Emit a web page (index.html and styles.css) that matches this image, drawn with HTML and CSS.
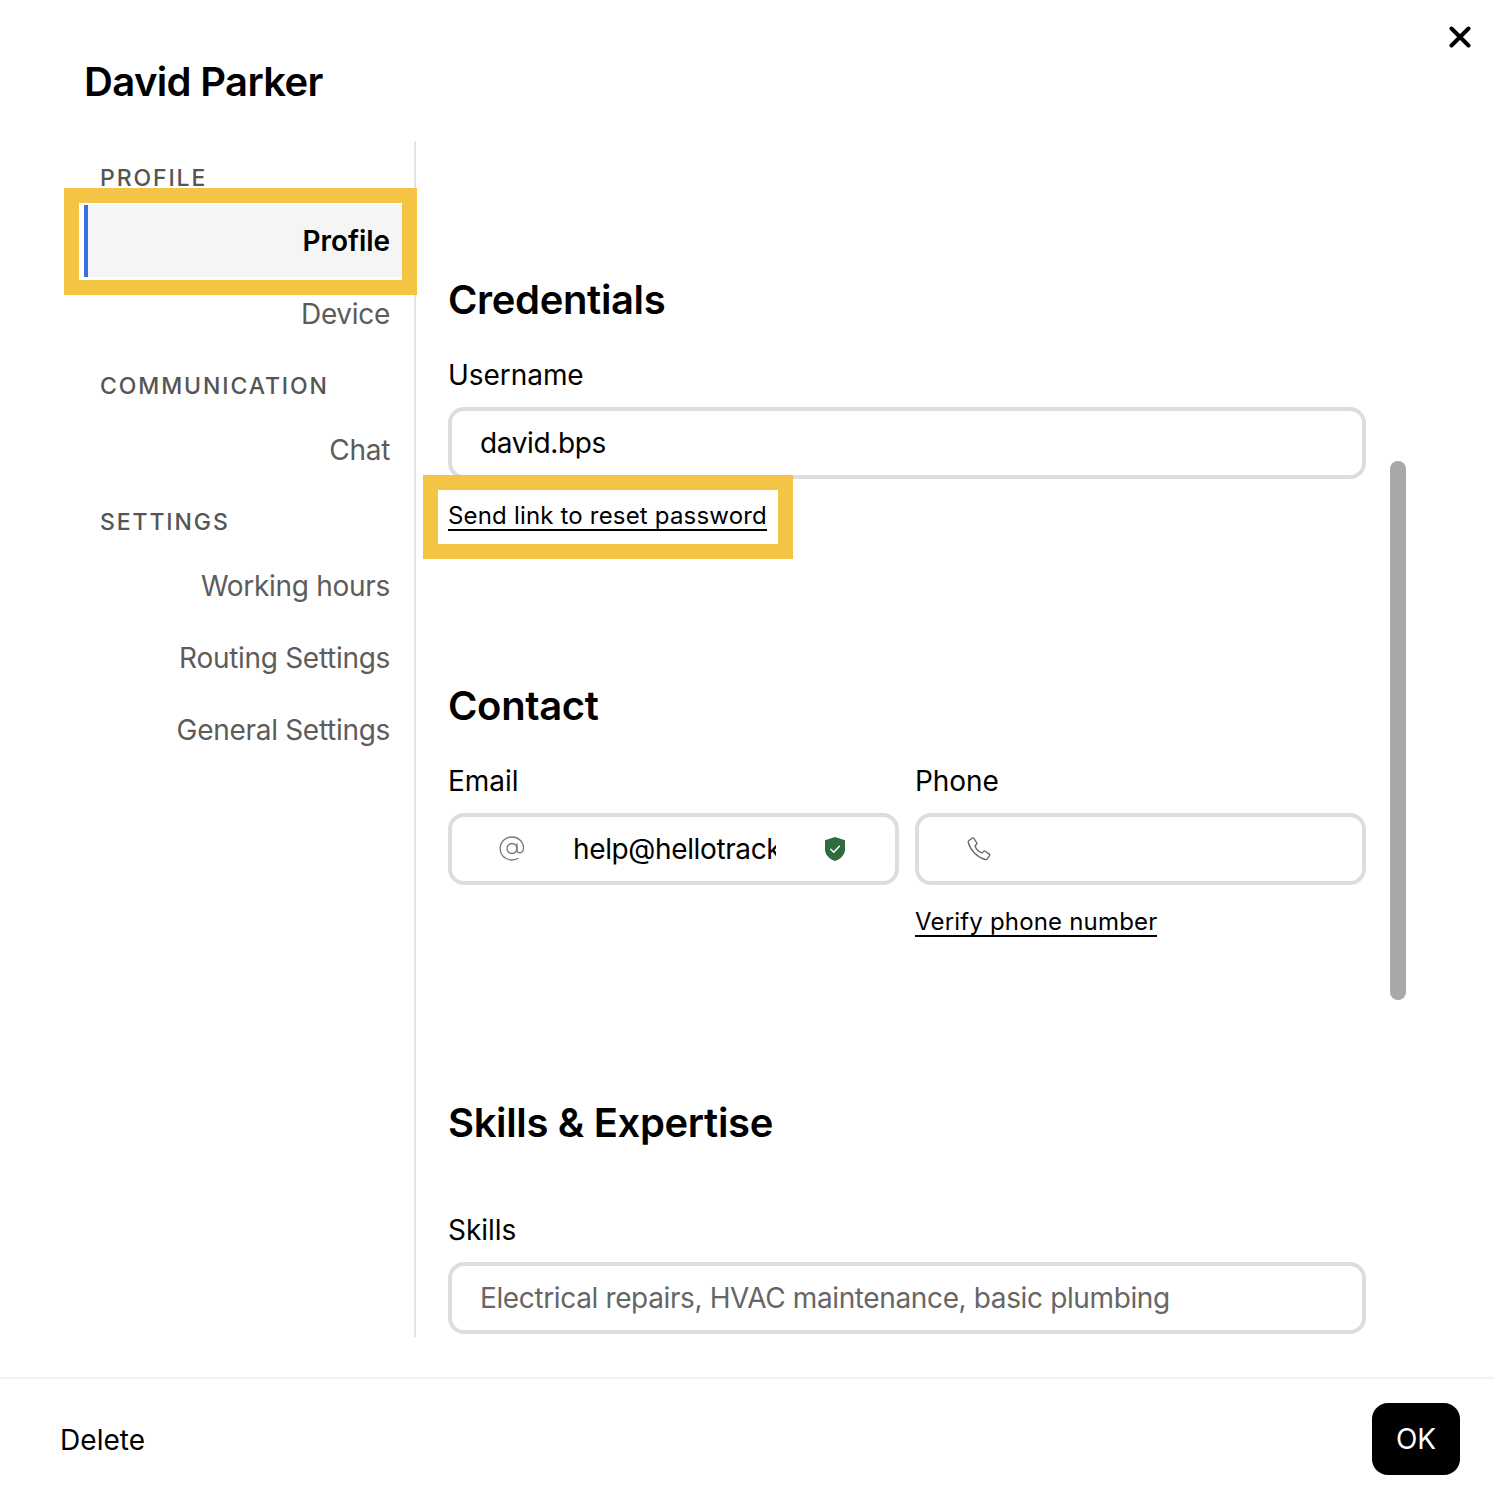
FILE: index.html
```html
<!DOCTYPE html>
<html lang="en">
<head>
<meta charset="utf-8">
<title>David Parker</title>
<link rel="stylesheet" href="styles.css">
</head>
<body>
<div class="dialog">
  <button class="close" aria-label="Close">
    <svg width="22" height="22" viewBox="0 0 22 22"><path d="M2.5 2.5l17 17M19.500 2.500l-17 17" fill="none" stroke="#000" stroke-width="4" stroke-linecap="round"/></svg>
  </button>
  <header class="head"><h1 class="title">David Parker</h1></header>
  <div class="body">
    <nav class="side">
      <div class="side-head">PROFILE</div>
      <a class="side-item active">Profile<span class="mark mark-nav"></span></a>
      <a class="side-item">Device</a>
      <div class="side-head">COMMUNICATION</div>
      <a class="side-item">Chat</a>
      <div class="side-head">SETTINGS</div>
      <a class="side-item">Working hours</a>
      <a class="side-item">Routing Settings</a>
      <a class="side-item">General Settings</a>
    </nav>
    <main class="main">
      <h2 class="sec sec-first">Credentials</h2>
      <label class="lab">Username</label>
      <div class="box"><input class="inp" value="david.bps"></div>
      <div class="linkrow"><a class="link">Send link to reset password<span class="mark mark-link"></span></a></div>

      <h2 class="sec sec-contact">Contact</h2>
      <div class="cols">
        <div class="col">
          <label class="lab">Email</label>
          <div class="box box-icon box-email">
            <svg class="ic ic-at" width="26" height="26" viewBox="0 0 26 26"><g fill="none" stroke="#777" stroke-width="1.300"><circle cx="13" cy="12.500" r="5"/><path d="M18 7.500v6.800c0 3.600 6.500 3.600 6.500-2.300C24.500 5.800 19.500 1 13 1 6.400 1 1.200 6 1.200 12.500 1.200 19.300 6.300 24 13 24c2.400 0 4.600-.6 6.500-1.700"/></g></svg>
            <input class="inp inp-email" value="help@hellotrack.com">
            <svg class="ic ic-shield" width="22" height="24" viewBox="0 0 22 24"><path d="M11 0l10 3.200v9C21 18 16.500 22 11 24 5.500 22 1 18 1 12.200v-9z" fill="#2f6b3f"/><path d="M6.800 12.200l3 3 5.600-6" fill="none" stroke="#fff" stroke-width="1.500" stroke-linecap="round" stroke-linejoin="round"/></svg>
          </div>
        </div>
        <div class="col">
          <label class="lab">Phone</label>
          <div class="box box-icon">
            <svg class="ic ic-phone" width="24" height="24" viewBox="0 0 24 24"><path d="M2 3.500L5 1.200c.7-.5 1.500-.3 2 .4l2.600 4c.4.7.3 1.400-.3 1.900L8 8.700c1 3 3.800 6 7 7.300l1.300-1.400c.5-.6 1.300-.7 1.900-.3l3.800 2.600c.7.500.9 1.300.4 2l-2.100 3c-.5.600-1.200.8-2 .6C10.500 20.500 3.500 13.500 1.300 5.500 1.100 4.700 1.400 4 2 3.500z" fill="none" stroke="#666" stroke-width="1.300" stroke-linejoin="round"/></svg>
            <input class="inp inp-phone" value="">
          </div>
          <div class="linkrow"><a class="link">Verify phone number</a></div>
        </div>
      </div>

      <h2 class="sec sec-skills">Skills &amp; Expertise</h2>
      <label class="lab lab-skills">Skills</label>
      <div class="box"><input class="inp" placeholder="Electrical repairs, HVAC maintenance, basic plumbing"></div>
    </main>
    <div class="scroll"></div>
  </div>
  <footer class="foot">
    <a class="del">Delete</a>
    <button class="ok">OK</button>
  </footer>
</div>
</body>
</html>
```
FILE: styles.css
```css
* { box-sizing: border-box; }
html, body { margin: 0; padding: 0; background: #fff; }
body { font-family: Inter, "Liberation Sans", sans-serif; color: #000; font-size: 28px; letter-spacing: -0.3px; }
.dialog { position: relative; width: 1494px; height: 1488px; display: flex; flex-direction: column; overflow: hidden; }
.close { position: absolute; left: 1449px; top: 26px; width: 22px; height: 22px; padding: 0; border: 0; background: none; display: block; }
.close svg { display: block; }
.head { height: 141px; padding: 0 0 0 84px; flex: none; }
.title { margin: 0; padding-top: 58px; font-size: 40px; line-height: 48px; font-weight: 600; letter-spacing: -0.65px; }
.body { position: relative; display: flex; height: 1196px; flex: none; }
.side { width: 416px; flex: none; border-right: 2px solid #e4e4e4; padding-right: 12px; }
.side-head { height: 64px; padding: 22px 0 0 100px; font-size: 23px; line-height: 30px; font-weight: 500; letter-spacing: 1.9px; color: #555; }
.side-item { position: relative; display: block; height: 72px; line-height: 74px; margin-left: 84px; padding-right: 12px; text-align: right; color: #5c5c5c; font-size: 28px; }
.active { line-height: 73px; background: #f5f5f5; border-left: 4px solid #3b6fe0; color: #000; font-weight: 600; letter-spacing: -0.05px; }
.mark { position: absolute; display: block; border: 15px solid #f4c544; pointer-events: none; }
.mark-nav { left: -24px; right: -15px; top: -17px; bottom: -18px; }
.mark-link { left: -25px; right: -26px; top: -23px; bottom: -30px; }
.main { width: 950px; padding: 135px 0 0 32px; overflow: hidden; flex: none; }
.sec { margin: 0; font-size: 40px; line-height: 48px; font-weight: 600; letter-spacing: -0.35px; }
.sec-contact { margin-top: 148px; }
.sec-skills { margin-top: 159px; }
.lab { display: block; margin-top: 31px; font-size: 28px; line-height: 40px; letter-spacing: -0.05px; }
.lab-skills { margin-top: 63px; }
.box { display: flex; align-items: center; height: 72px; margin-top: 12px; border: 4px solid #ddd; border-radius: 16px; background: #fff; }
.inp { display: block; width: 100%; min-width: 0; height: 100%; padding: 0 28px; border: 0; outline: 0; background: transparent; font: 400 28px Inter, "Liberation Sans", sans-serif; letter-spacing: -0.37px; color: #000; }
.inp::placeholder { color: #666; opacity: 1; }
.linkrow { display: flex; align-items: flex-start; margin-top: 19px; height: 36px; }
.link { position: relative; display: block; padding-top: 4px; font-size: 24px; line-height: 27px; border-bottom: 2px solid #000; letter-spacing: 0.18px; }
.cols { display: grid; grid-template-columns: 451px 451px; column-gap: 16px; width: 918px; }
.box-icon { padding-left: 46px; }
.box-email { padding-left: 47px; }
.ic { display: block; flex: none; }
.inp-email { width: 203px; padding: 0; margin-left: 48px; flex: none; }
.ic-shield { margin-left: 48px; }
.ic-phone { margin-left: 2px; }
.inp-phone { padding-left: 16px; }
.scroll { position: absolute; left: 1390px; top: 320px; width: 16px; height: 539px; border-radius: 8px; background: #a8a8a8; }
.foot { display: flex; justify-content: space-between; align-items: flex-start; flex: none; margin-top: 40px; border-top: 2px solid #f2f2f2; padding: 24px 34px 0 60px; height: 111px; }
.del { font-size: 28px; line-height: 74px; letter-spacing: 0.05px; }
.ok { width: 88px; height: 72px; padding: 0; border: 0; border-radius: 16px; background: #000; color: #fff; font: 400 28px Inter, "Liberation Sans", sans-serif; }
```
